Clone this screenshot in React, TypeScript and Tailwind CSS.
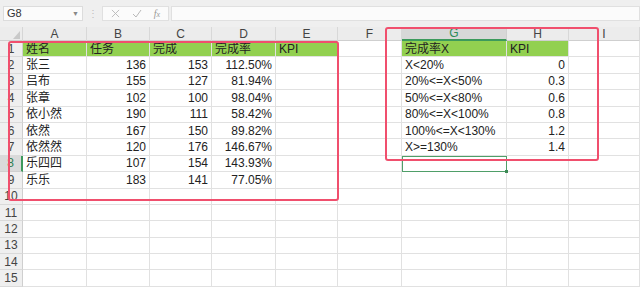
import React from "react";

const COLS = "grid-cols-[23px_64px_63px_62px_64px_62px_64px_105px_62px_71px]";
const LETTERS = ["A", "B", "C", "D", "E", "F", "G", "H", "I"];

type Cell = { t?: string; r?: boolean; g?: boolean };

const data: string[][] = [
  ["张三", "136", "153", "112.50%", "", "", "X<20%", "0"],
  ["吕布", "155", "127", "81.94%", "", "", "20%<=X<50%", "0.3"],
  ["张章", "102", "100", "98.04%", "", "", "50%<=X<80%", "0.6"],
  ["依小然", "190", "111", "58.42%", "", "", "80%<=X<100%", "0.8"],
  ["依然", "167", "150", "89.82%", "", "", "100%<=X<130%", "1.2"],
  ["依然然", "120", "176", "146.67%", "", "", "X>=130%", "1.4"],
  ["乐四四", "107", "154", "143.93%", "", "", "", ""],
  ["乐乐", "183", "141", "77.05%", "", "", "", ""],
];

function buildRows(): Cell[][] {
  const rows: Cell[][] = [];
  const head = ["姓名", "任务", "完成", "完成率", "KPI", "", "完成率X", "KPI", ""];
  rows.push(head.map((t, i) => ({ t, g: i <= 4 || i === 6 || i === 7 })));
  data.forEach((d) => {
    const r: Cell[] = [];
    for (let i = 0; i < 9; i++) {
      const t = d[i] ?? "";
      const right = i === 1 || i === 2 || i === 3 || i === 7;
      r.push({ t, r: right });
    }
    rows.push(r);
  });
  for (let k = 0; k < 6; k++) rows.push(Array.from({ length: 9 }, () => ({})));
  return rows;
}

export default function App() {
  const rows = buildRows();
  return (
    <div
      className="relative w-[640px] h-[287px] overflow-hidden bg-white text-[#222]"
      style={{ fontFamily: '"Liberation Sans", "Noto Sans CJK SC", sans-serif' }}
    >
      {/* toolbar */}
      <div className="h-[27px] bg-[#efefef] flex items-start pt-[6px] pl-[3px]">
        <div className="w-[80px] h-[15px] bg-[#fbfbfb] border border-[#dcdcdc] flex items-center justify-between pl-[3px] pr-[3px]">
          <span className="text-[11px] leading-none text-[#333]">G8</span>
          <span className="text-[7px] leading-none text-[#888]">▼</span>
        </div>
        <div className="w-[19px] h-[15px] flex items-center justify-center text-[#bdbdbd] text-[10px] leading-none">⋮</div>
        <div className="w-[67px] h-[15px] bg-[#fbfbfb] border border-[#e0e0e0] flex items-center justify-around px-[2px] text-[#b5b5b5]">
          <svg width="9" height="9" viewBox="0 0 10 10" fill="none" stroke="#b8b8b8" strokeWidth="1">
            <path d="M1 1 L9 9 M9 1 L1 9" />
          </svg>
          <svg width="10" height="9" viewBox="0 0 10 9" fill="none" stroke="#b8b8b8" strokeWidth="1">
            <path d="M1 5 L4 8 L9 1" />
          </svg>
          <span className="text-[10px] leading-none italic text-[#999]" style={{ fontFamily: '"Liberation Serif", serif' }}>
            f<span className="text-[8px]">x</span>
          </span>
        </div>
        <div className="ml-[2px] flex-1 h-[15px] bg-[#fbfbfb] border border-[#e0e0e0]" />
      </div>

      {/* column header */}
      <div className={`grid ${COLS} h-[14px] bg-[#ececec] border-b border-[#cfcfcf]`}>
        <div className="relative border-r border-[#d6d6d6]">
          <div
            className="absolute right-[2px] bottom-[2px] w-[7px] h-[8px] bg-[#c9c9c9]"
            style={{ clipPath: "polygon(100% 0, 100% 100%, 0 100%)" }}
          />
        </div>
        {LETTERS.map((l) => (
          <div
            key={l}
            className={
              l === "G"
                ? "flex items-center justify-center bg-[#d8d8d8] border-r border-[#d0d0d0] text-[12px] leading-none text-[#2e8b57] border-b-2 border-b-[#3d9a5c]"
                : "flex items-center justify-center border-r border-[#d8d8d8] text-[12px] leading-none text-[#444]"
            }
          >
            {l}
          </div>
        ))}
      </div>

      {/* rows */}
      {rows.map((row, ri) => (
        <div key={ri} className={`grid ${COLS} h-[16.4px]`}>
          <div
            className={
              ri === 7
                ? "flex items-center justify-center bg-[#dadada] border-b border-[#d0d0d0] border-r-2 border-r-[#3d9a5c] text-[12px] leading-none text-[#2e7d4f]"
                : "flex items-center justify-center bg-[#efefef] border-b border-[#dadada] border-r border-r-[#cfcfcf] text-[12px] leading-none text-[#444]"
            }
          >
            {ri + 1}
          </div>
          {row.map((c, ci) => (
            <div
              key={ci}
              className={`flex items-center whitespace-nowrap overflow-visible border-r border-b border-[#e1e1e1] text-[12px] leading-none ${
                c.r ? "justify-end pr-[3px]" : "justify-start pl-[3px]"
              } ${c.g ? "bg-[#92d050]" : "bg-white"}`}
            >
              {c.t}
            </div>
          ))}
        </div>
      ))}

      {/* active cell G8 */}
      <div className="absolute left-[402px] top-[155.8px] w-[105px] h-[16.4px] border border-[#4f9e68]">
        <div className="absolute right-[-2px] bottom-[-2px] w-[3px] h-[3px] bg-[#3d8a55]" />
      </div>

      {/* red highlight boxes */}
      <div className="absolute left-[8px] top-[41px] w-[331px] h-[160px] border-2 border-[#f04f6d] rounded-[3px]" />
      <div className="absolute left-[385px] top-[27px] w-[214px] h-[134px] border-2 border-[#f04f6d] rounded-[3px]" />
    </div>
  );
}
